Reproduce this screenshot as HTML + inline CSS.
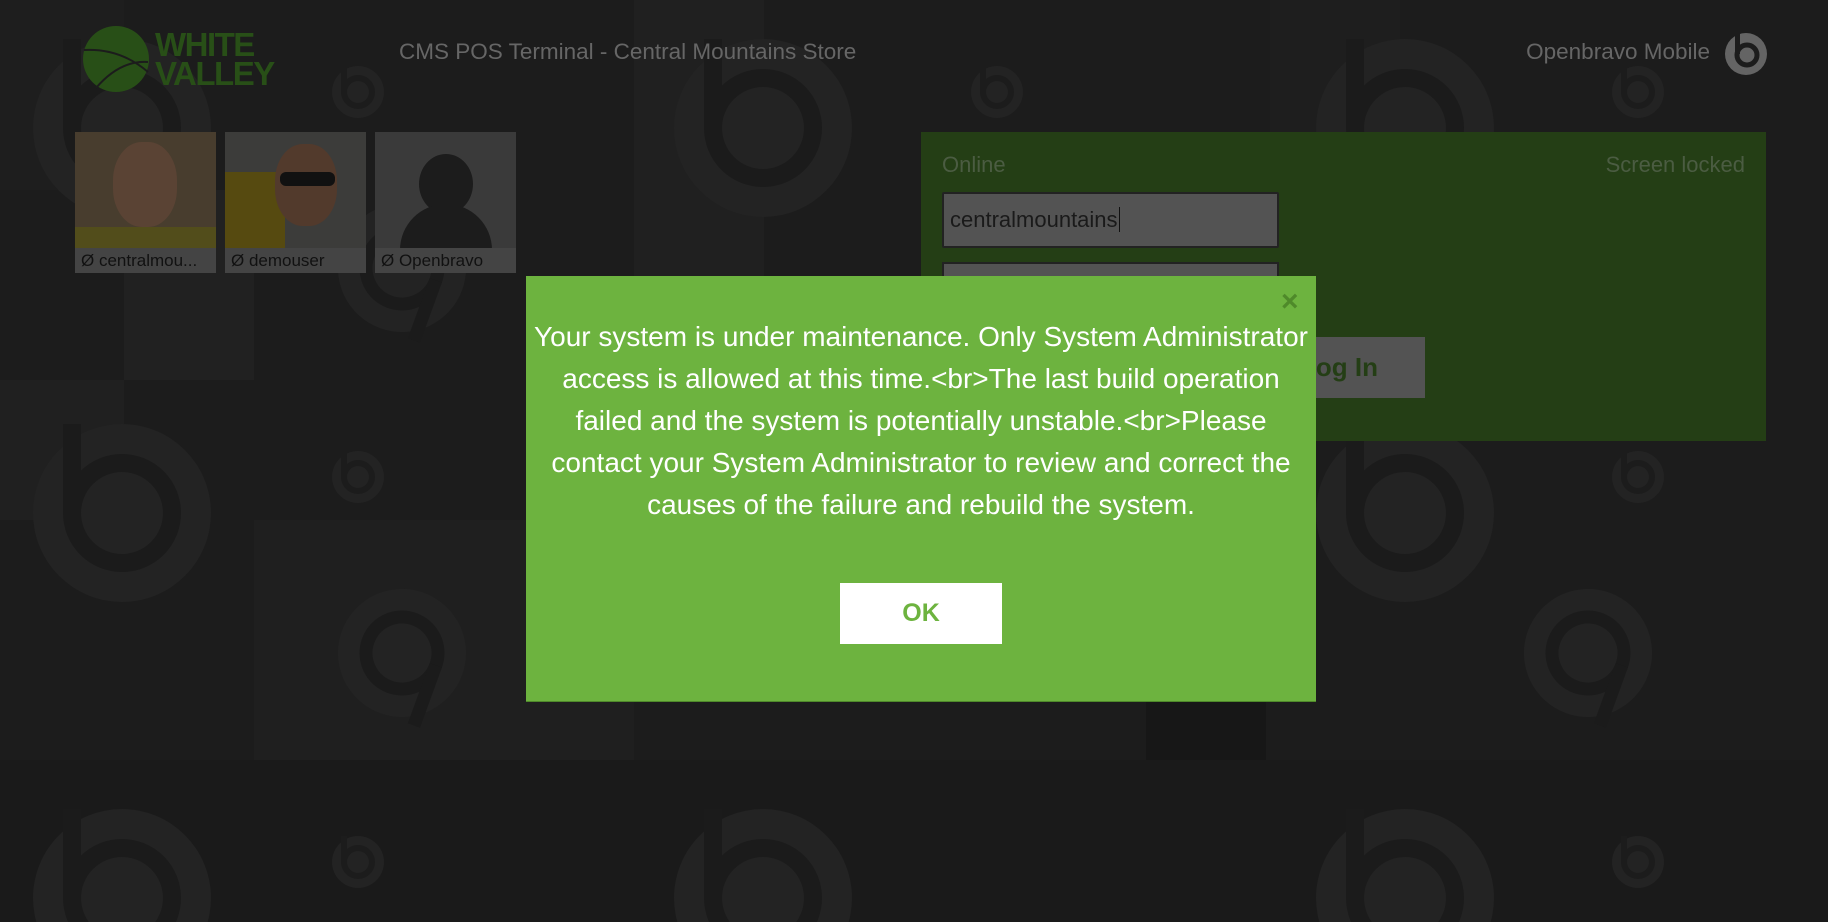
<!DOCTYPE html>
<html><head><meta charset="utf-8"><style>
*{margin:0;padding:0;box-sizing:border-box}
html,body{width:1828px;height:922px;overflow:hidden}
body{background:#1c1c1c;font-family:"Liberation Sans",sans-serif;position:relative}
.a{position:absolute}
.sq{position:absolute;background:#1f1f1f}
.tile{position:absolute;top:132px;width:141px;height:141px;background:#3a3a3a;overflow:hidden}
.tile .lb{position:absolute;left:0;bottom:0;width:100%;height:25px;background:#444;color:#111;font-size:17px;line-height:25px;padding-left:6px;white-space:nowrap}
.msg{position:absolute;left:526px;top:316px;width:790px;text-align:center;color:#fff;font-size:28px;line-height:42px;white-space:nowrap}
</style></head><body>
<div class="sq" style="left:0;top:0;width:124px;height:190px;background:#1e1e1e"></div>
<div class="sq" style="left:124px;top:190px;width:130px;height:190px;background:#212121"></div>
<div class="sq" style="left:0;top:380px;width:124px;height:140px;background:#202020"></div>
<div class="sq" style="left:254px;top:520px;width:380px;height:240px;background:#1f1f1f"></div>
<div class="sq" style="left:0;top:760px;width:1828px;height:162px;background:#1a1a1a"></div>
<div class="sq" style="left:634px;top:0;width:130px;height:320px;background:#202020"></div>
<div class="sq" style="left:1270px;top:0;width:130px;height:420px;background:#1e1e1e"></div>
<div class="sq" style="left:1146px;top:700px;width:120px;height:60px;background:#171717"></div>
<svg class="a" style="left:0;top:0" width="1828" height="922">
<defs>
<g id="b"><circle r="89" fill="#232323"/><circle r="50" fill="none" stroke="#1b1b1b" stroke-width="18"/><rect x="-59" y="-89" width="18" height="89" fill="#1b1b1b"/></g>
<g id="s"><circle r="26" fill="#232323"/><circle r="14" fill="none" stroke="#1c1c1c" stroke-width="6"/><rect x="-17" y="-26" width="6" height="26" fill="#1c1c1c"/></g>
</defs>
<use href="#b" x="122" y="128"/><use href="#b" x="763" y="128"/><use href="#b" x="1405" y="128"/>
<use href="#b" x="122" y="513"/><use href="#b" x="1405" y="513"/>
<use href="#b" x="122" y="898"/><use href="#b" x="763" y="898"/><use href="#b" x="1405" y="898"/>
<use href="#s" x="358" y="92"/><use href="#s" x="997" y="92"/><use href="#s" x="1638" y="92"/>
<use href="#s" x="358" y="477"/><use href="#s" x="1638" y="477"/>
<use href="#s" x="358" y="862"/><use href="#s" x="1638" y="862"/>
<g transform="translate(402,653) rotate(200) scale(0.72)"><use href="#b"/></g>
<g transform="translate(1588,653) rotate(200) scale(0.72)"><use href="#b"/></g>
<g transform="translate(402,268) rotate(200) scale(0.72)"><use href="#b"/></g>
<circle cx="116" cy="59" r="33" fill="#284f17"/>
<path d="M84 50 Q120 48 148 72 M96 88 Q120 60 148 62" stroke="#1c1c1c" stroke-width="2" fill="none"/>
</svg>
<div class="a" style="left:155px;top:30px;color:#284f17;font-weight:bold;font-size:33px;line-height:29px;letter-spacing:-1.5px">WHITE<br>VALLEY</div>
<div class="a" style="left:399px;top:39px;color:#666;font-size:22.5px">CMS POS Terminal - Central Mountains Store</div>
<div class="a" style="left:1410px;top:39px;width:300px;text-align:right;color:#666;font-size:22.5px">Openbravo Mobile</div>
<svg class="a" style="left:1724px;top:30px" width="44" height="46"><circle cx="22" cy="24" r="21" fill="#646464"/><circle cx="23" cy="25" r="10" fill="none" stroke="#1c1c1c" stroke-width="5"/><rect x="11" y="4" width="5" height="20" fill="#1c1c1c"/></svg>
<div class="tile" style="left:75px;background:#483d2e"><div class="a" style="left:38px;top:10px;width:64px;height:85px;border-radius:45%;background:#5a4334"></div><div class="a" style="left:0;top:95px;width:141px;height:25px;background:#524d1b"></div><div class="lb">Ø centralmou...</div></div>
<div class="tile" style="left:225px;background:#3c3c3a"><div class="a" style="left:0;top:40px;width:60px;height:80px;background:#564a10"></div><div class="a" style="left:50px;top:12px;width:62px;height:82px;border-radius:45%;background:#523a2c"></div><div class="a" style="left:55px;top:40px;width:55px;height:14px;background:#111;border-radius:6px"></div><div class="lb">Ø demouser</div></div>
<div class="tile" style="left:375px"><div class="a" style="left:44px;top:22px;width:54px;height:60px;border-radius:50%;background:#1c1c1c"></div><div class="a" style="left:25px;top:72px;width:92px;height:80px;border-radius:46px 46px 0 0;background:#1c1c1c"></div><div class="lb">Ø Openbravo</div></div>
<div class="a" style="left:921px;top:132px;width:845px;height:309px;background:#243e15"></div>
<div class="a" style="left:942px;top:152px;color:#4b5c42;font-size:22px">Online</div>
<div class="a" style="left:1445px;top:152px;width:300px;text-align:right;color:#4b5c42;font-size:22px">Screen locked</div>
<div class="a" style="left:942px;top:192px;width:337px;height:56px;background:#535353;border:2px solid #222;border-radius:2px;color:#1a1a1a;font-size:22px;line-height:52px;padding-left:6px">centralmountains<span style="border-left:1px solid #111;margin-left:1px"></span></div>
<div class="a" style="left:942px;top:262px;width:337px;height:40px;background:#535353;border:2px solid #222"></div>
<div class="a" style="left:1282px;top:337px;width:143px;height:61px;background:#535353;color:#243e15;font-weight:bold;font-size:26px;line-height:61px;padding-left:18px">Log In</div>
<div class="a" style="left:526px;top:276px;width:790px;height:425px;background:#6db33f;box-shadow:0 1px 0 #4f8a2a"></div>
<div class="a" style="left:1281px;top:285px;color:#4f8a2a;font-size:30px;font-weight:bold">×</div>
<div class="msg">Your system is under maintenance. Only System Administrator<br>access is allowed at this time.&lt;br&gt;The last build operation<br>failed and the system is potentially unstable.&lt;br&gt;Please<br>contact your System Administrator to review and correct the<br>causes of the failure and rebuild the system.</div>
<div class="a" style="left:840px;top:583px;width:162px;height:61px;background:#fff;color:#6db33f;font-weight:bold;font-size:25px;line-height:61px;text-align:center">OK</div>
</body></html>
